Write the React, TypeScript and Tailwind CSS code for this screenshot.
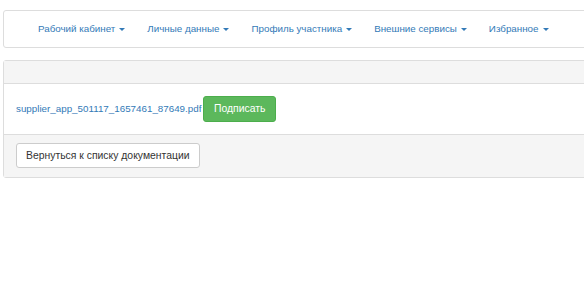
import React from 'react'

const menu = ['Рабочий кабинет', 'Личные данные', 'Профиль участника', 'Внешние сервисы', 'Избранное']

function Caret() {
  return (
    <span className="ml-[4px] inline-block h-0 w-0 border-x-[3px] border-t-[3px] border-x-transparent border-t-[#337ab7] align-middle" />
  )
}

function Navbar() {
  return (
    <div className="ml-[3px] mt-[10px] flex h-[38px] w-[600px] items-center rounded-l-[3px] border border-[#dddddd] bg-white pl-[23px]">
      {menu.map((item) => (
        <a key={item} href="#" className="flex items-center px-[11px] text-[9.8px] text-[#337ab7]">
          {item}
          <Caret />
        </a>
      ))}
    </div>
  )
}

function DocPanel() {
  return (
    <div className="ml-[3px] mt-[12px] w-[600px] rounded-l-[3px] border border-[#dddddd] bg-white">
      <div className="h-[23px] border-b border-[#dddddd] bg-[#f5f5f5]"></div>
      <div className="flex items-center px-[12px] py-[12px]">
        <a href="#" className="text-[9.8px] text-[#337ab7]">supplier_app_501117_1657461_87649.pdf</a>
        <button className="ml-[2px] h-[26px] rounded-[3px] border border-[#4cae4c] bg-[#5cb85c] px-[9.5px] text-[10.4px] text-white">
          Подписать
        </button>
      </div>
      <div className="border-t border-[#dddddd] bg-[#f5f5f5] px-[12px] pb-[9px] pt-[7px]">
        <button className="h-[25px] rounded-[3px] border border-[#cccccc] bg-white px-[9px] text-[10.4px] text-[#333333]">
          Вернуться к списку документации
        </button>
      </div>
    </div>
  )
}

export default function App() {
  return (
    <div className="h-[297px] w-[584px] overflow-hidden bg-white" style={{ fontFamily: '"Liberation Sans", Arial, sans-serif' }}>
      <Navbar />
      <DocPanel />
    </div>
  )
}
